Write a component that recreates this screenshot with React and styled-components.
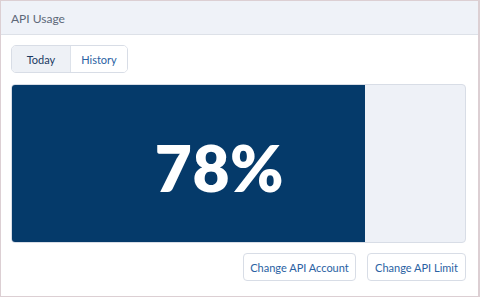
import React from 'react';
import styled, { createGlobalStyle } from 'styled-components';

const Global = createGlobalStyle`
  html, body {
    margin: 0;
    padding: 0;
    background: #ffffff;
  }
  body {
    font-family: Lato, "Open Sans", "Liberation Sans", sans-serif;
  }
`;

const Card = styled.div`
  width: 480px;
  height: 297px;
  box-sizing: border-box;
  border: 1px solid #dccfd3;
  border-right-width: 2px;
  background: #ffffff;
  display: flex;
  flex-direction: column;
`;

const Header = styled.div`
  height: 34px;
  flex: none;
  display: flex;
  align-items: center;
  padding: 1px 10px 0;
  box-sizing: border-box;
  background: #eff2f8;
  border-bottom: 1px solid #dde1e8;
  color: #5d6878;
  font-size: 12px;
`;

const Body = styled.div`
  flex: 1;
  display: flex;
  flex-direction: column;
  padding: 10px 12px 0 10px;
`;

const Tabs = styled.div`
  display: flex;
  align-self: flex-start;
  height: 28px;
  box-sizing: border-box;
  border: 1px solid #d8dde6;
  border-radius: 5px;
  overflow: hidden;
`;

const Tab = styled.button`
  width: ${p => (p.$first ? 58 : 57)}px;
  border: none;
  border-left: ${p => (p.$first ? 'none' : '1px solid #dde2ea')};
  padding: 0;
  margin: 0;
  font-family: inherit;
  font-size: 11px;
  font-weight: 400;
  background: ${p => (p.$active ? '#eef1f6' : '#ffffff')};
  color: ${p => (p.$active ? '#1b3a63' : '#2a62a3')};
`;

const Chart = styled.div`
  position: relative;
  margin-top: 11px;
  height: 159px;
  box-sizing: border-box;
  display: flex;
  background: #eef1f7;
  border: 1px solid #d8dde6;
  border-radius: 4px;
  overflow: hidden;
`;

const Fill = styled.div`
  height: 100%;
  background: #053a6a;
`;

const Percent = styled.div`
  position: absolute;
  inset: 0;
  display: flex;
  align-items: center;
  justify-content: center;
  padding: 7px 38px 0 0;
  color: #ffffff;
  font-size: 64px;
  font-weight: 800;
  letter-spacing: 0.5px;
`;

const Actions = styled.div`
  display: flex;
  justify-content: flex-end;
  gap: 11px;
  margin-top: 10px;
`;

const Button = styled.button`
  width: ${p => p.$w}px;
  height: 28px;
  padding: 0;
  box-sizing: border-box;
  border: 1px solid #d8dde6;
  border-radius: 4px;
  background: #ffffff;
  color: #2a62a3;
  font-family: inherit;
  font-size: 11px;
`;

const usage = 78;

export default function App() {
  return (
    <>
      <Global />
      <Card>
        <Header>API Usage</Header>
        <Body>
          <Tabs>
            <Tab $first $active>Today</Tab>
            <Tab>History</Tab>
          </Tabs>
          <Chart>
            <Fill style={{ width: `${usage}%` }} />
            <Percent>{usage}%</Percent>
          </Chart>
          <Actions>
            <Button $w={113}>Change API Account</Button>
            <Button $w={99}>Change API Limit</Button>
          </Actions>
        </Body>
      </Card>
    </>
  );
}
